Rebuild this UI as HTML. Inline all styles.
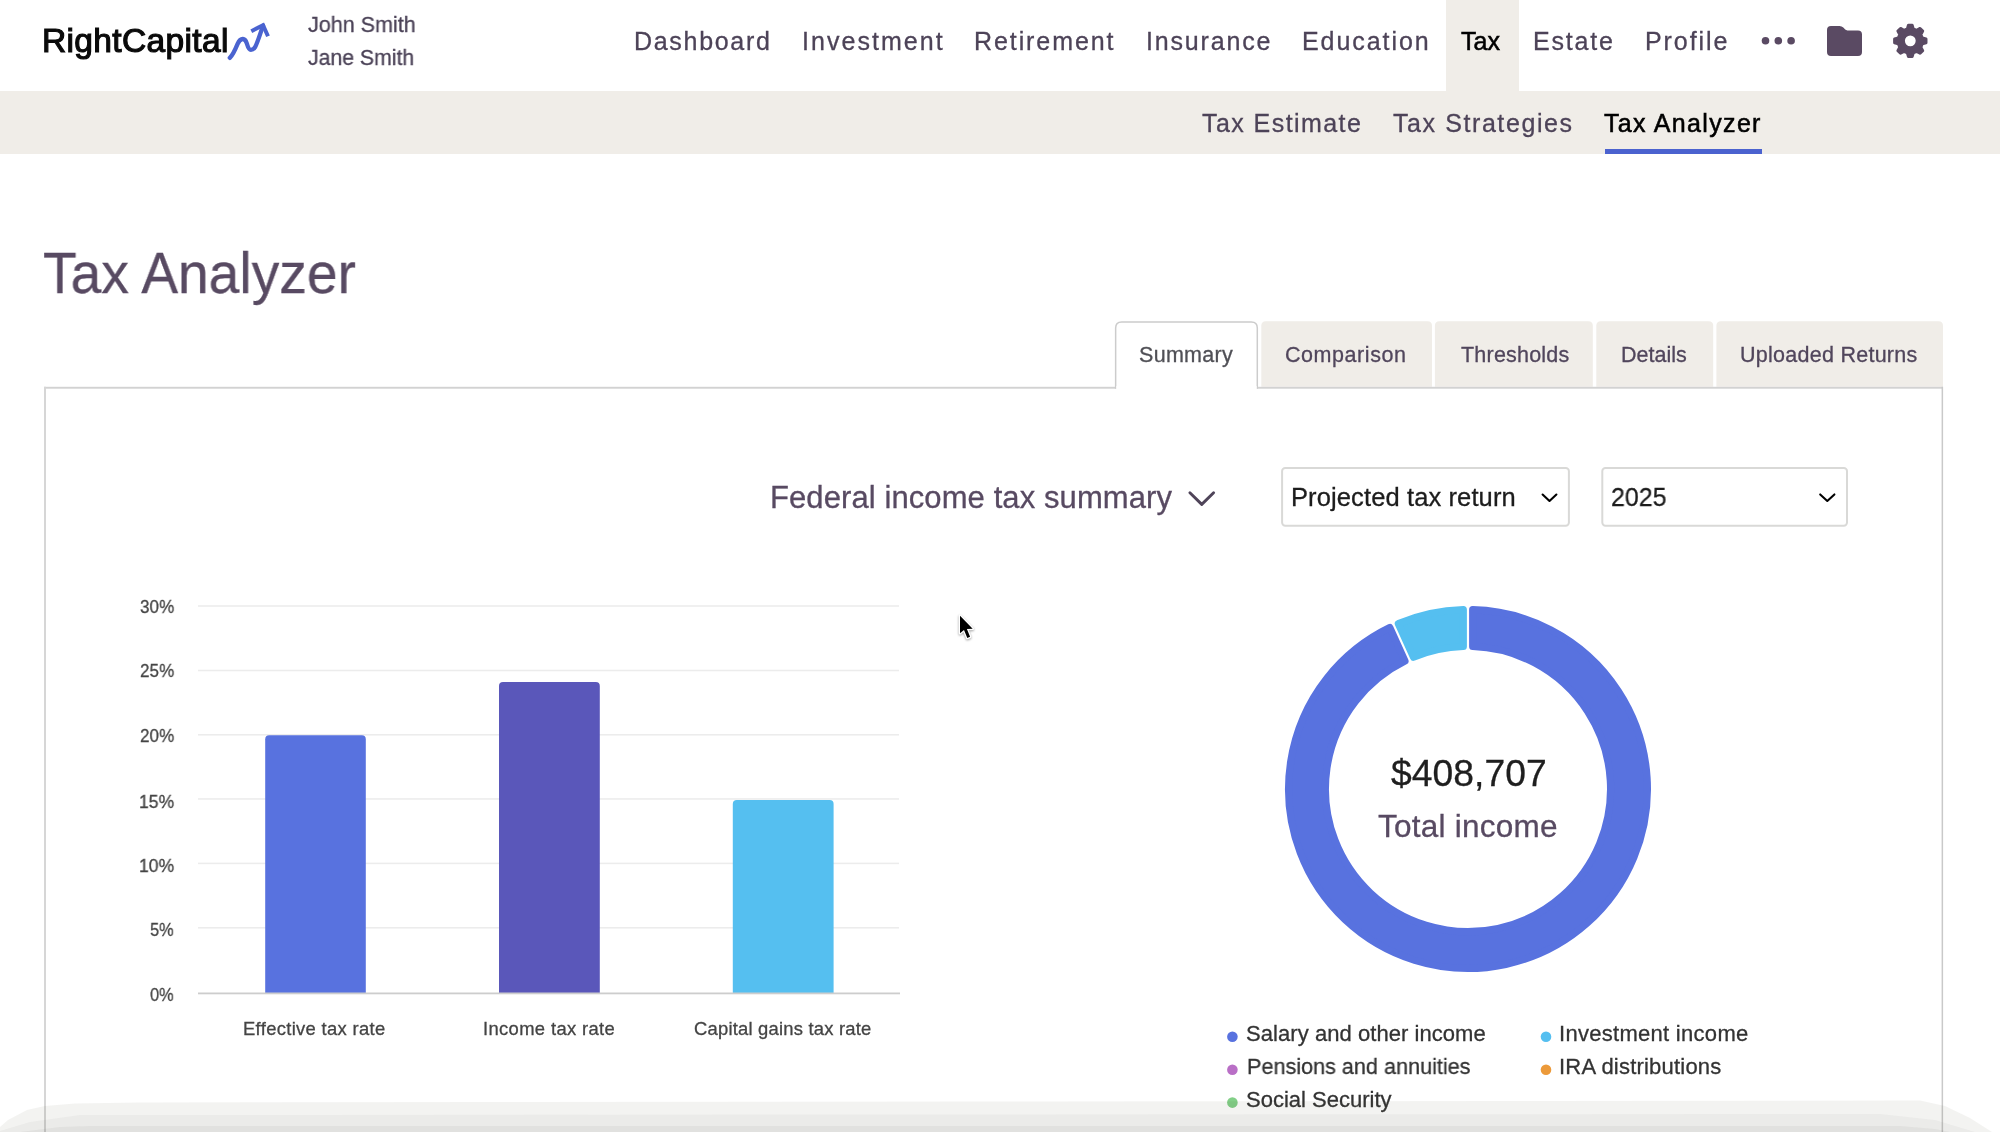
<!DOCTYPE html>
<html lang="en"><head><meta charset="utf-8"><title>Tax Analyzer</title>
<style>
html,body{margin:0;padding:0;background:#fff;}
body{width:2000px;height:1132px;position:relative;overflow:hidden;font-family:"Liberation Sans",sans-serif;}
.t{position:absolute;white-space:nowrap;line-height:1;transform-origin:0 50%;will-change:transform;-webkit-text-stroke:0.3px currentColor;font-family:"Liberation Sans",sans-serif;}
.b{position:absolute;box-sizing:border-box;}
.ov{position:absolute;left:0;top:0;pointer-events:none;}
</style></head><body>
<div class="b" style="left:1446.3px;top:0;width:72.4px;height:92px;background:#f0ede8"></div>
<div class="b" style="left:0;top:91px;width:2000px;height:63px;background:#f0ede8"></div>
<div class="b" style="left:1604.5px;top:149px;width:157.5px;height:5px;background:#4b62cf"></div>
<svg class="ov" width="2000" height="1132" viewBox="0 0 2000 1132">
<!-- tabs -->
<path d="M1261.3,386.8 L1261.3,325.7 Q1261.3,321.2 1265.8,321.2 L1427.5,321.2 Q1432,321.2 1432,325.7 L1432,386.8 Z" fill="#f0ede8"/><path d="M1434.9,386.8 L1434.9,325.7 Q1434.9,321.2 1439.4,321.2 L1588.3,321.2 Q1592.8,321.2 1592.8,325.7 L1592.8,386.8 Z" fill="#f0ede8"/><path d="M1596.3,386.8 L1596.3,325.7 Q1596.3,321.2 1600.8,321.2 L1708.7,321.2 Q1713.2,321.2 1713.2,325.7 L1713.2,386.8 Z" fill="#f0ede8"/><path d="M1716.4,386.8 L1716.4,325.7 Q1716.4,321.2 1720.9,321.2 L1938.5,321.2 Q1943,321.2 1943,325.7 L1943,386.8 Z" fill="#f0ede8"/>
<!-- panel + active tab -->
<rect x="44" y="386.8" width="1899" height="1.9" fill="#d2d2d2"/>
<rect x="44" y="386.8" width="2" height="760" fill="#d6d6d6"/>
<rect x="1941.6" y="386.8" width="1.5" height="760" fill="#c9c9c9"/>
<path d="M1115.65,388.8 L1115.65,327.9 Q1115.65,321.9 1121.65,321.9 L1251.3,321.9 Q1257.3,321.9 1257.3,327.9 L1257.3,388.8" fill="#ffffff" stroke="#cccccc" stroke-width="1.5"/>
<rect x="1116.4" y="386" width="140.15" height="3.4" fill="#ffffff"/>
<!-- logo arrow -->
<path d="M229.8,57.9 C233,55 235.5,49 237.6,43.9 C239.3,40 241,38.9 242.9,39 C245,39.1 246,41 246.8,43.4 C248,47.5 249,49.9 250.9,49.9 C253,49.9 254,49 255.1,47.1 C257.4,43 260.2,34 263,25.6" fill="none" stroke="#4a63d0" stroke-width="4.3" stroke-linecap="round" stroke-linejoin="round"/>
<path d="M251.3,31.2 L263.04,25.23 L268,36.3" fill="none" stroke="#4a63d0" stroke-width="4" stroke-linecap="butt" stroke-linejoin="miter"/>
<!-- dots -->
<circle cx="1765.5" cy="40.8" r="3.8" fill="#5a4a63"/><circle cx="1778.3" cy="40.8" r="3.8" fill="#5a4a63"/><circle cx="1791.1" cy="40.8" r="3.8" fill="#5a4a63"/>
<!-- folder -->
<path d="M1831,26 L1839.5,26 Q1841.8,26 1843.3,27.6 L1845.2,29.6 Q1846,30.4 1847.4,30.4 L1858,30.4 Q1862,30.4 1862,34.4 L1862,52 Q1862,56 1858,56 L1831,56 Q1827,56 1827,52 L1827,30 Q1827,26 1831,26 Z" fill="#5a4a63"/>
<path d="M1907.33,28.91 L1908.44,25.16 L1912.16,25.16 L1913.27,28.91 L1916.64,30.31 L1920.08,28.44 L1922.71,31.07 L1920.84,34.51 L1922.24,37.88 L1925.99,38.99 L1925.99,42.71 L1922.24,43.82 L1920.84,47.19 L1922.71,50.63 L1920.08,53.26 L1916.64,51.39 L1913.27,52.79 L1912.16,56.54 L1908.44,56.54 L1907.33,52.79 L1903.96,51.39 L1900.52,53.26 L1897.89,50.63 L1899.76,47.19 L1898.36,43.82 L1894.61,42.71 L1894.61,38.99 L1898.36,37.88 L1899.76,34.51 L1897.89,31.07 L1900.52,28.44 L1903.96,30.31Z M1903.3999999999999,40.85 a6.9,6.9 0 1 0 13.8,0 a6.9,6.9 0 1 0 -13.8,0Z" fill="#5a4a63" fill-rule="evenodd" stroke="#5a4a63" stroke-width="3" stroke-linejoin="round"/>
<!-- selects -->
<rect x="1282.1" y="467.9" width="286.8" height="57.85" rx="3.2" fill="#fff" stroke="#d9d9d7" stroke-width="2"/>
<rect x="1602.3" y="467.9" width="244.7" height="57.85" rx="3.2" fill="#fff" stroke="#d9d9d7" stroke-width="2"/>
<!-- chevrons -->
<path d="M1189.9,492.7 L1201.75,504.4 L1213.6,492.7" fill="none" stroke="#4f4459" stroke-width="2.9" stroke-linecap="round" stroke-linejoin="round"/>
<path d="M1542.6,494.5 L1549.5,501.0 L1556.4,494.5" fill="none" stroke="#000" stroke-width="2.1" stroke-linecap="round" stroke-linejoin="round"/>
<path d="M1820.2,494.4 L1827.3000000000002,500.9 L1834.4,494.4" fill="none" stroke="#000" stroke-width="2.1" stroke-linecap="round" stroke-linejoin="round"/>
<rect x="198" y="605.25" width="701" height="1.5" fill="#ececec"/><rect x="198" y="669.75" width="701" height="1.5" fill="#ececec"/><rect x="198" y="734.05" width="701" height="1.5" fill="#ececec"/><rect x="198" y="798.20" width="701" height="1.5" fill="#ececec"/><rect x="198" y="862.65" width="701" height="1.5" fill="#ececec"/><rect x="198" y="927.05" width="701" height="1.5" fill="#ececec"/><path d="M265.2,993 L265.2,739.3 Q265.2,735.3 269.2,735.3 L361.8,735.3 Q365.8,735.3 365.8,739.3 L365.8,993 Z" fill="#5872df"/><path d="M499,993 L499,686.1 Q499,682.1 503,682.1 L595.8,682.1 Q599.8,682.1 599.8,686.1 L599.8,993 Z" fill="#5a57ba"/><path d="M732.8,993 L732.8,803.9 Q732.8,799.9 736.8,799.9 L829.6,799.9 Q833.6,799.9 833.6,803.9 L833.6,993 Z" fill="#55bff0"/><rect x="198" y="992.5" width="702" height="1.8" fill="#cdcdcd"/>
<path d="M1472.70,609.66 A179.4,179.4 0 1 1 1389.78,627.55 L1404.96,661.09 A142.6,142.6 0 1 0 1472.70,646.48 Z" fill="#5872df" stroke="#5872df" stroke-width="7.2" stroke-linejoin="round"/><path d="M1398.34,623.68 A179.4,179.4 0 0 1 1463.30,609.66 L1463.30,646.48 A142.6,142.6 0 0 0 1413.52,657.22 Z" fill="#55bff0" stroke="#55bff0" stroke-width="7.2" stroke-linejoin="round"/>
<!-- legend dots -->
<circle cx="1232.4" cy="1036.8" r="5.3" fill="#5872df"/>
<circle cx="1546" cy="1036.8" r="5.3" fill="#55bff0"/>
<circle cx="1232.4" cy="1069.8" r="5.3" fill="#b96fc6"/>
<circle cx="1546" cy="1069.8" r="5.3" fill="#ec9a3a"/>
<circle cx="1232.4" cy="1102.6" r="5.3" fill="#82cf87"/>
</svg>
<span class="t" style="left:41.84px;top:22px;line-height:37px;font-size:33.5px;color:#0a0a0a;letter-spacing:0.360px;-webkit-text-stroke:1.15px #0a0a0a;">RightCapital</span>
<span class="t" style="left:308.00px;top:12px;line-height:25px;font-size:22px;color:#4b4257;transform:scaleX(0.9787);">John Smith</span>
<span class="t" style="left:308.00px;top:45px;line-height:25px;font-size:22px;color:#4b4257;transform:scaleX(0.9649);">Jane Smith</span>
<span class="t" style="left:634.25px;top:27px;line-height:28px;font-size:25px;color:#4d4358;letter-spacing:1.700px;">Dashboard</span>
<span class="t" style="left:801.75px;top:27px;line-height:28px;font-size:25px;color:#4d4358;letter-spacing:2.046px;">Investment</span>
<span class="t" style="left:974.25px;top:27px;line-height:28px;font-size:25px;color:#4d4358;letter-spacing:1.909px;">Retirement</span>
<span class="t" style="left:1146.00px;top:27px;line-height:28px;font-size:25px;color:#4d4358;letter-spacing:1.827px;">Insurance</span>
<span class="t" style="left:1302.25px;top:27px;line-height:28px;font-size:25px;color:#4d4358;letter-spacing:1.932px;">Education</span>
<span class="t" style="left:1533.00px;top:27px;line-height:28px;font-size:25px;color:#4d4358;letter-spacing:1.806px;">Estate</span>
<span class="t" style="left:1645.00px;top:27px;line-height:28px;font-size:25px;color:#4d4358;letter-spacing:1.924px;">Profile</span>
<span class="t" style="left:1461.25px;top:27px;line-height:28px;font-size:25px;color:#000000;letter-spacing:0.048px;-webkit-text-stroke:0.55px #000;">Tax</span>
<span class="t" style="left:1201.78px;top:109px;line-height:28px;font-size:25px;color:#4d4358;letter-spacing:1.436px;">Tax Estimate</span>
<span class="t" style="left:1393.00px;top:109px;line-height:28px;font-size:25px;color:#4d4358;letter-spacing:1.584px;">Tax Strategies</span>
<span class="t" style="left:1604.45px;top:109px;line-height:28px;font-size:25px;color:#000000;letter-spacing:1.337px;-webkit-text-stroke:0.55px #000;">Tax Analyzer</span>
<span class="t" style="left:43.41px;top:240px;line-height:65px;font-size:58px;color:#584a62;transform:scaleX(0.9518);">Tax Analyzer</span>
<span class="t" style="left:1138.61px;top:343px;line-height:24px;font-size:21.5px;color:#505056;letter-spacing:0.294px;">Summary</span>
<span class="t" style="left:1284.88px;top:343px;line-height:24px;font-size:21.5px;color:#51465c;letter-spacing:0.561px;">Comparison</span>
<span class="t" style="left:1460.50px;top:343px;line-height:24px;font-size:21.5px;color:#51465c;letter-spacing:0.210px;">Thresholds</span>
<span class="t" style="left:1621.14px;top:343px;line-height:24px;font-size:21.5px;color:#51465c;letter-spacing:0.005px;">Details</span>
<span class="t" style="left:1740.12px;top:343px;line-height:24px;font-size:21.5px;color:#51465c;letter-spacing:0.263px;">Uploaded Returns</span>
<span class="t" style="left:770.00px;top:480px;line-height:35px;font-size:31px;color:#584a62;letter-spacing:0.093px;">Federal income tax summary</span>
<span class="t" style="left:1290.95px;top:483px;line-height:28px;font-size:25.5px;color:#1c1c1c;letter-spacing:0.113px;">Projected tax return</span>
<span class="t" style="left:1611.40px;top:482px;line-height:30px;font-size:26px;color:#1c1c1c;transform:scaleX(0.9580);">2025</span>
<span class="t" style="left:139.50px;top:596px;line-height:21px;font-size:19px;color:#444444;transform:scaleX(0.8984);">30%</span>
<span class="t" style="left:139.50px;top:660px;line-height:21px;font-size:19px;color:#444444;transform:scaleX(0.8984);">25%</span>
<span class="t" style="left:139.50px;top:725px;line-height:21px;font-size:19px;color:#444444;transform:scaleX(0.8984);">20%</span>
<span class="t" style="left:138.58px;top:791px;line-height:21px;font-size:19px;color:#444444;transform:scaleX(0.9226);">15%</span>
<span class="t" style="left:138.58px;top:855px;line-height:21px;font-size:19px;color:#444444;transform:scaleX(0.9226);">10%</span>
<span class="t" style="left:150.00px;top:919px;line-height:21px;font-size:19px;color:#444444;transform:scaleX(0.8621);">5%</span>
<span class="t" style="left:150.00px;top:984px;line-height:21px;font-size:19px;color:#444444;transform:scaleX(0.8621);">0%</span>
<span class="t" style="left:243.33px;top:1018px;line-height:21px;font-size:18.4px;color:#444444;letter-spacing:0.329px;">Effective tax rate</span>
<span class="t" style="left:482.50px;top:1018px;line-height:21px;font-size:18.4px;color:#444444;letter-spacing:0.356px;">Income tax rate</span>
<span class="t" style="left:694.33px;top:1018px;line-height:21px;font-size:18.4px;color:#444444;letter-spacing:0.213px;">Capital gains tax rate</span>
<span class="t" style="left:1390.71px;top:752px;line-height:42px;font-size:37.3px;color:#1f1f1f;letter-spacing:0.029px;">$408,707</span>
<span class="t" style="left:1378.27px;top:808px;line-height:36px;font-size:31.5px;color:#584a62;letter-spacing:0.244px;">Total income</span>
<span class="t" style="left:1246.09px;top:1021px;line-height:25px;font-size:22px;color:#333333;letter-spacing:0.058px;">Salary and other income</span>
<span class="t" style="left:1558.63px;top:1021px;line-height:25px;font-size:22px;color:#333333;letter-spacing:0.287px;">Investment income</span>
<span class="t" style="left:1247.18px;top:1054px;line-height:25px;font-size:22px;color:#333333;transform:scaleX(0.9824);">Pensions and annuities</span>
<span class="t" style="left:1559.34px;top:1054px;line-height:25px;font-size:22px;color:#333333;letter-spacing:0.208px;">IRA distributions</span>
<span class="t" style="left:1246.00px;top:1087px;line-height:25px;font-size:22px;color:#333333;">Social Security</span>
<svg class="ov" style="z-index:5" width="2000" height="1132" viewBox="0 0 2000 1132">
<polygon points="0,1127 8,1120 27,1110 45,1106 75,1103.5 140,1102.5 1000,1101.5 1920,1100.5 1945,1106 1970,1118 1992,1132 0,1132" fill="rgba(80,80,60,0.07)"/>
<polygon points="0,1131 30,1122 80,1115 1880,1114 1935,1120 1975,1132 0,1132" fill="rgba(70,70,60,0.045)"/>
<polygon points="20,1132 60,1127 90,1126 1900,1126 1935,1129 1950,1132" fill="rgba(60,60,60,0.055)"/>
<!-- cursor -->
<g style="filter:drop-shadow(0.3px 1.6px 1.3px rgba(0,0,0,0.38))">
<path d="M960,615.7 L960,633.3 L964,629.9 L967.3,638 L970.1,636.7 L966.9,629.1 L972.7,628.7 Z" fill="#000" stroke="#fff" stroke-width="2.6" stroke-linejoin="round" paint-order="stroke"/>
</g>
</svg>
</body></html>
